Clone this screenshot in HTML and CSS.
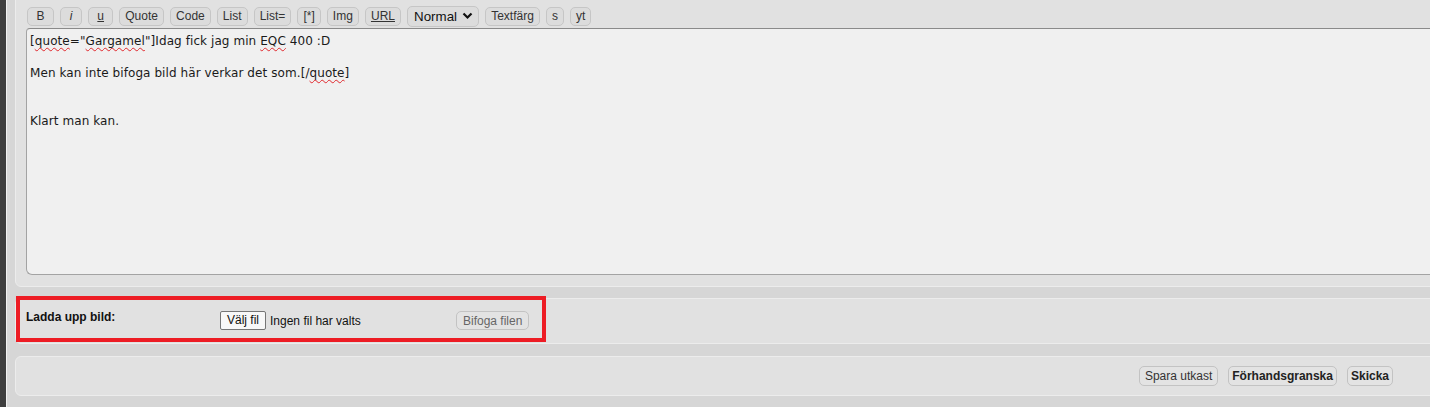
FILE: index.html
```html
<!DOCTYPE html>
<html lang="sv">
<head>
<meta charset="utf-8">
<title>Skriv inlägg</title>
<link rel="stylesheet" href="styles.css">
</head>
<body>
<div class="page">
  <div class="rail"></div>
  <div class="main">
    <div class="panel editor">
      <div class="toolbar">
        <button class="tb w-b">B</button>
        <button class="tb w-i"><i>i</i></button>
        <button class="tb w-u"><u>u</u></button>
        <button class="tb">Quote</button>
        <button class="tb">Code</button>
        <button class="tb">List</button>
        <button class="tb">List=</button>
        <button class="tb">[*]</button>
        <button class="tb">Img</button>
        <button class="tb"><u>URL</u></button>
        <div class="fsel"><span>Normal</span><svg width="11" height="8" viewBox="0 0 11 8"><path d="M1.5 1.5 L5.5 5.5 L9.5 1.5" fill="none" stroke="#111" stroke-width="2.2"/></svg></div>
        <button class="tb">Textfärg</button>
        <button class="tb">s</button>
        <button class="tb">yt</button>
      </div>
      <div class="msg"><div class="line">[<span class="sp">quote</span>="<span class="sp">Gargamel</span>"]Idag fick jag min <span class="sp">EQC</span> 400 :D</div><div class="line">&nbsp;</div><div class="line">Men kan inte bifoga bild här verkar det som.[/<span class="sp">quote</span>]</div><div class="line">&nbsp;</div><div class="line">&nbsp;</div><div class="line">Klart man kan.</div></div>
    </div>

    <div class="panel upload">
      <div class="up-label">Ladda upp bild:</div>
      <div class="filebox">
        <span class="filebtn">Välj fil</span>
        <span class="filename">Ingen fil har valts</span>
      </div>
      <button class="btn2 attach">Bifoga filen</button>
      <div class="highlight"></div>
    </div>

    <div class="panel actions">
      <button class="btn2">Spara utkast</button>
      <button class="btn2 strong">Förhandsgranska</button>
      <button class="btn2 strong">Skicka</button>
    </div>
  </div>
</div>
</body>
</html>
```

FILE: styles.css
```css
html, body {
  margin: 0;
  padding: 0;
}

body {
  background: #d5d5d5;
  font-family: "Liberation Sans", Arial, sans-serif;
  font-size: 12px;
  color: #222;
  overflow: hidden;
}

.page {
  display: flex;
  height: 407px;
  overflow: hidden;
  background: #d6d6d6;
}

.rail {
  flex: 0 0 6px;
  background: #3d3d3d;
  border-right: 1px solid #f0f0f0;
}

.main {
  flex: 0 0 1440px;
  padding-left: 8px;
  display: flex;
  flex-direction: column;
}

.panel {
  background: #e1e1e1;
  border: 1px solid #ececec;
  border-radius: 6px;
  position: relative;
}

.editor {
  margin-top: -8px;
  padding: 12px 0 11px 10px;
}

.toolbar {
  display: flex;
  align-items: center;
  gap: 6.1px;
  height: 22px;
  padding-left: 1px;
}

.tb {
  font-family: "Liberation Sans", Arial, sans-serif;
  font-size: 12px;
  color: #333;
  height: 19px;
  padding: 0 5px;
  background: #dcdcdc;
  border: 1px solid #c6c6c6;
  border-radius: 5px;
  line-height: 17px;
}

.w-b { width: 27px; }
.w-i { width: 22px; }
.w-u { width: 25px; }

.fsel {
  display: flex;
  align-items: center;
  justify-content: space-between;
  box-sizing: border-box;
  width: 72px;
  height: 21px;
  padding: 0 5px 0 6px;
  background: #dcdcdc;
  border: 1px solid #c6c6c6;
  border-radius: 5px;
  font-size: 13.33px;
  color: #111;
}

.msg {
  margin-top: 1px;
  height: 241px;
  background: #f0f0f0;
  border: 1px solid #a3a3a3;
  border-top-color: #8a8a8a;
  border-right: none;
  border-radius: 4px 0 0 6px;
  padding: 4px 4px 0 3px;
  font-family: "DejaVu Sans", Verdana, sans-serif;
  font-size: 12px;
  letter-spacing: 0.08px;
  line-height: 16px;
  color: #1a1a1a;
  white-space: pre-wrap;
}

.sp {
  text-decoration: underline wavy #e0282d;
  text-decoration-thickness: 1px;
  text-underline-offset: 2px;
  text-decoration-skip-ink: none;
}

.upload {
  margin-top: 11px;
  height: 44px;
  display: flex;
  align-items: flex-start;
  padding-left: 10px;
}

.up-label {
  font-weight: bold;
  font-size: 12px;
  color: #111;
  width: 194px;
  padding-top: 11px;
}

.filebox {
  display: flex;
  align-items: center;
  gap: 4px;
  padding-top: 12px;
  width: 236px;
}

.filebtn {
  display: inline-block;
  box-sizing: border-box;
  height: 19px;
  line-height: 17px;
  padding: 0 6px;
  background: #f8f8f8;
  border: 1px solid #767676;
  border-radius: 2px;
  font-size: 12px;
  color: #111;
}

.filename {
  font-size: 12px;
  color: #111;
}

.btn2 {
  font-family: "Liberation Sans", Arial, sans-serif;
  font-size: 12px;
  color: #333;
  height: 20px;
  padding: 0 5px;
  background: #e3e3e3;
  border: 1px solid #c3c3c3;
  border-radius: 5px;
  line-height: 18px;
}

.attach {
  margin-top: 12px;
  height: 19px;
  color: #666;
  padding: 0 6px;
}

.strong {
  font-weight: bold;
  color: #222;
  padding: 0 3px;
}

.highlight {
  position: absolute;
  left: 0;
  top: -3px;
  width: 522px;
  height: 38px;
  border: 4px solid #ed1c24;
  pointer-events: none;
}

.actions {
  margin-top: 12px;
  height: 38px;
  display: flex;
  align-items: center;
  justify-content: flex-end;
  gap: 10px;
  padding-right: 61px;
}
```
